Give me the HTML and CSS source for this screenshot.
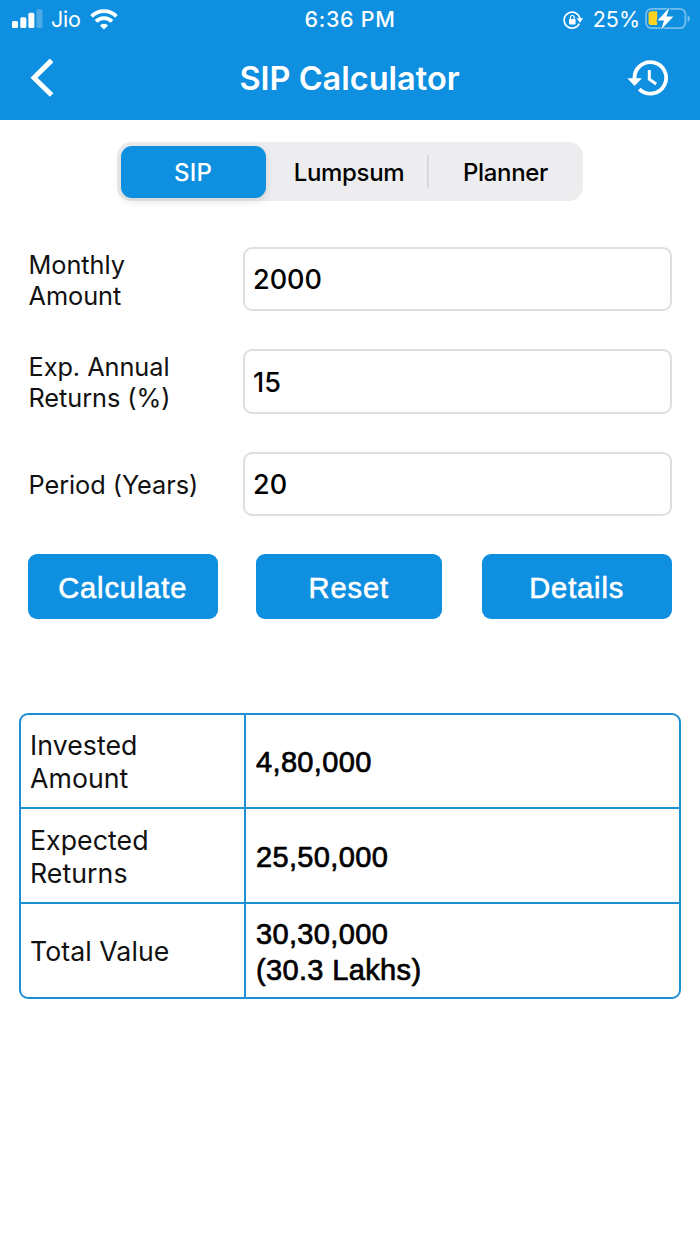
FILE: index.html
```html
<!DOCTYPE html>
<html lang="en">
<head>
<meta charset="utf-8">
<title>SIP Calculator</title>
<link rel="stylesheet" href="styles.css">
</head>
<body>
<header class="header">
  <div class="status">
    <div class="status-left">
      <svg class="signal" width="31" height="20" viewBox="0 0 32 20" fill="#fff"><rect x="0" y="12" width="6.2" height="7.3" rx="1.6"/><rect x="8.6" y="8.2" width="6.2" height="11.1" rx="1.6"/><rect x="16.9" y="3.6" width="6.2" height="15.7" rx="1.6"/><rect x="25.3" y="0" width="6.2" height="19.3" rx="1.6" opacity=".25"/></svg>
      <span class="carrier">Jio</span>
      <svg class="wifi" width="28" height="21" viewBox="0 0 28 21"><g fill="none" stroke="#fff" stroke-width="3.8"><path d="M1.6 7.4a17.4 17.4 0 0 1 24.8 0"/><path d="M6 12.4a11.3 11.3 0 0 1 16 0"/></g><path d="M9.9 16.5a5.8 5.8 0 0 1 8.2 0L14 20.6z" fill="#fff"/></svg>
    </div>
    <div class="time">6:36 PM</div>
    <div class="status-right">
      <svg class="lock" width="21" height="18" viewBox="0 0 21 18"><path d="M16.3 12.6A8 8 0 1 1 17 8" fill="none" stroke="#fff" stroke-width="1.6"/><path d="M13.6 7.3h6.6l-3.2 4.4z" fill="#fff"/><rect x="6" y="8" width="6.6" height="5.4" rx=".8" fill="#fff"/><path d="M7.4 8.3V6.4a1.9 1.9 0 0 1 3.8 0v1.9" fill="none" stroke="#fff" stroke-width="1.2"/></svg>
      <span class="percent">25%</span>
      <svg class="battery" width="46" height="24" viewBox="0 0 46 24"><rect x="1" y="1.8" width="39.4" height="19.4" rx="5.6" fill="none" stroke="#fff" stroke-opacity=".42" stroke-width="1.8"/><path d="M42.6 8v7q2.2-1 2.2-3.5t-2.2-3.5z" fill="#fff" opacity=".45"/><path d="M6.3 4.3h5.9v13.8H6.3a2.8 2.8 0 0 1-2.8-2.8V7.1a2.8 2.8 0 0 1 2.8-2.8z" fill="#ffd21f"/><path d="M24.4.5 12.6 13.4h6.4L16.1 22.7 28.4 9.4h-6.9z" fill="#fff" stroke="#0e8fdf" stroke-width="1.6" paint-order="stroke"/></svg>
    </div>
  </div>
  <div class="nav">
    <svg class="back" width="24" height="40" viewBox="0 0 24 40"><path d="M21.6 2.4 4 19.8l17.6 17.2" fill="none" stroke="#fff" stroke-width="5"/></svg>
    <h1 class="title">SIP Calculator</h1>
    <svg class="history" width="42" height="38" viewBox="0 0 42 38"><path d="M7.6 20.5A15.8 15.8 0 1 1 12.3 30.2" fill="none" stroke="#fff" stroke-width="3.8"/><path d="M.3 19.2h14.6l-7.3 7.7z" fill="#fff"/><path d="M22.3 11v9.2l6.9 4.8" fill="none" stroke="#fff" stroke-width="3"/></svg>
  </div>
</header>
<main class="content">
  <nav class="segments">
    <span class="segment selected">SIP</span>
    <span class="segment lump"><span>Lumpsum</span></span>
    <span class="segment planner"><span>Planner</span></span>
  </nav>
  <section class="form">
    <div class="field"><label class="label">Monthly<br>Amount</label><div class="input">2000</div></div>
    <div class="field"><label class="label">Exp. Annual<br>Returns (%)</label><div class="input">15</div></div>
    <div class="field"><label class="label">Period (Years)</label><div class="input">20</div></div>
  </section>
  <div class="buttons">
    <button class="button">Calculate</button>
    <button class="button">Reset</button>
    <button class="button">Details</button>
  </div>
  <section class="results">
    <div class="cell name">Invested<br>Amount</div><div class="cell value">4,80,000</div>
    <div class="cell name">Expected<br>Returns</div><div class="cell value">25,50,000</div>
    <div class="cell name">Total Value</div><div class="cell value">30,30,000<br>(30.3 Lakhs)</div>
  </section>
</main>
</body>
</html>
```
FILE: styles.css
```css
* { box-sizing: border-box; }
body { margin: 0; min-height: 1244px; background: #fff; color: #111; font-family: Inter, "Liberation Sans", sans-serif; }
svg { display: block; flex: none; }
.header { height: 119.5px; background: #0e8fdf; color: #fff; }
.status { display: grid; grid-template-columns: 1fr auto 1fr; height: 39px; align-items: center; padding: 0 9px 0 12px; font-size: 21.5px; }
.status-left, .status-right { display: flex; align-items: center; }
.status-right { justify-content: flex-end; }
.signal { margin-top: -2px; }
.carrier { margin: -1px 0 0 8px; letter-spacing: -.3px; }
.wifi { margin: -1px 0 0 10px; }
.time { margin: -1px 0 0 -3px; font-weight: 500; letter-spacing: .7px; }
.percent { margin: -1px 5px 0 9px; }
.battery { margin-top: -1px; }
.nav { display: grid; grid-template-columns: 1fr auto 1fr; align-items: center; height: 78px; padding: 0 31px 0 30px; }
.history { justify-self: end; }
.title { margin: 0; font-size: 32.5px; font-weight: 600; letter-spacing: 0; }
.content { padding: 22.5px 19px 0; }
.segments { display: grid; grid-template-columns: 145px 163px 1fr; width: 466px; height: 59px; margin: 0 auto; padding: 3.5px; border-radius: 14px; background: #ededef; font-size: 24px; font-weight: 500; }
.segment { display: flex; align-items: center; justify-content: center; padding-top: 1px; color: #000; letter-spacing: -.3px; }
.segment.selected { height: 52.5px; border-radius: 11px; background: #0e8fdf; color: #fff; letter-spacing: .2px; box-shadow: 0 3px 8px rgba(0,0,0,.12); }
.lump { padding-left: 4px; background: linear-gradient(#d3d3d6, #d3d3d6) right center / 1.5px 33px no-repeat; }
.planner { padding-left: 3px; }
.form { display: grid; gap: 38px; padding: 45.5px 9.5px 0; }
.field { display: grid; grid-template-columns: 214.5px 1fr; align-items: center; height: 64.5px; }
.label { padding-top: 1.5px; font-size: 25.3px; line-height: 31px; letter-spacing: -.05px; }
.input { display: flex; align-items: center; height: 64.5px; padding: 2px 0 0 8px; border: 2px solid #dfdfdf; border-radius: 9px; color: #000; font-size: 27px; font-weight: 500; }
.buttons { display: grid; grid-template-columns: 189.5px 185.5px 190.5px; column-gap: 38.5px; padding: 38px 9px 0; }
.button { height: 65px; padding: 0; border: 0; border-radius: 9px; background: #0e8fdf; color: #fff; font: 29px "Liberation Sans", Arial, sans-serif; padding-top: 3px; letter-spacing: .9px; -webkit-text-stroke: .6px #fff; }
.button:last-child { margin: 0 -1.5px 0 1.5px; }
.results { display: grid; grid-template-columns: 225px 1fr; grid-template-rows: 94px 95px 93px; margin-top: 94px; width: 662px; height: 286px; border: 2px solid #1d8fd3; border-radius: 9px; overflow: hidden; }
.cell { display: flex; align-items: center; border-bottom: 2px solid #1d8fd3; }
.cell:nth-last-child(-n+2) { border-bottom: 0; }
.name { padding: 2px 0 0 9px; border-right: 2px solid #1d8fd3; font-size: 26.7px; line-height: 33px; letter-spacing: .05px; }
.value { padding: 2px 0 0 10px; font: 29px/36px "Liberation Sans", Arial, sans-serif; letter-spacing: .35px; color: #000; -webkit-text-stroke: .7px #000; }
```
